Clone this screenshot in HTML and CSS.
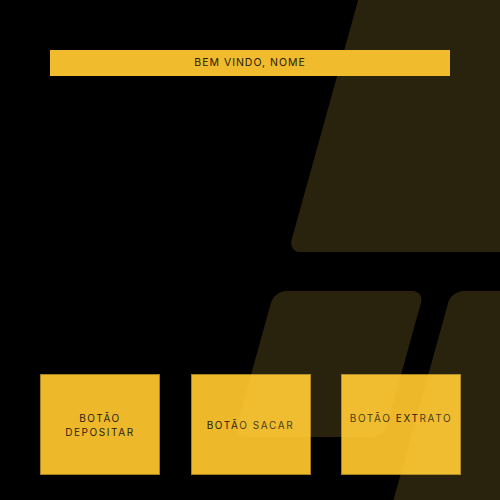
FILE: index.html
```html
<!DOCTYPE html>
<html>
    <head lang="pt">
        <meta charset="UTF-8">
        <title>Banco</title>
        <link rel="stylesheet" href="styles.css">
    </head>
    <body>
    <div id="page">
        <div id="welcome">BEM VINDO, NOME</div>
        <div id="actions">
            <button class="action">BOTÃO<br>DEPOSITAR</button>
            <button class="action">BOTÃO SACAR</button>
            <button class="action action-high">BOTÃO EXTRATO</button>
        </div>
        <div class="shape shape-top"></div>
        <div class="shape shape-mid"></div>
        <div class="shape shape-right"></div>
    </div>
    </body>
</html>
```

FILE: styles.css
```css
*{
    margin:0;
    padding:0;
    box-sizing:border-box;
}
html,body{
    background:#000;
    height:100%;
}
body{
    font-family:Inter,"Liberation Sans",sans-serif;
    overflow:hidden;
}
#page{
    position:relative;
    height:500px;
    padding-top:50px;
    overflow:hidden;
}
#welcome{
    position:relative;
    z-index:1;
    margin:0 50px;
    height:26px;
    line-height:26px;
    background:#f0bb2c;
    color:#2a2110;
    font-size:10.5px;
    letter-spacing:1px;
    text-align:center;
}
#actions{
    display:flex;
    gap:30.5px;
    margin-top:298px;
    padding-left:40px;
}
.action{
    width:120px;
    height:101px;
    background:#edb92a;
    border:1px solid #a4801f;
    color:#2a2110;
    font-family:inherit;
    font-size:10px;
    line-height:14px;
    letter-spacing:1.6px;
    text-align:center;
}
.action-high{
    padding-bottom:14px;
}
.shape{
    position:absolute;
    background:rgba(255,214,80,0.16);
    border-radius:12px;
    transform:skewX(-15.5deg);
    pointer-events:none;
}
.shape-top{
    left:326px;
    top:-20px;
    width:320px;
    height:272px;
}
.shape-mid{
    left:254px;
    top:291px;
    width:150px;
    height:146px;
}
.shape-right{
    left:414px;
    top:291px;
    width:200px;
    height:270px;
}
```
